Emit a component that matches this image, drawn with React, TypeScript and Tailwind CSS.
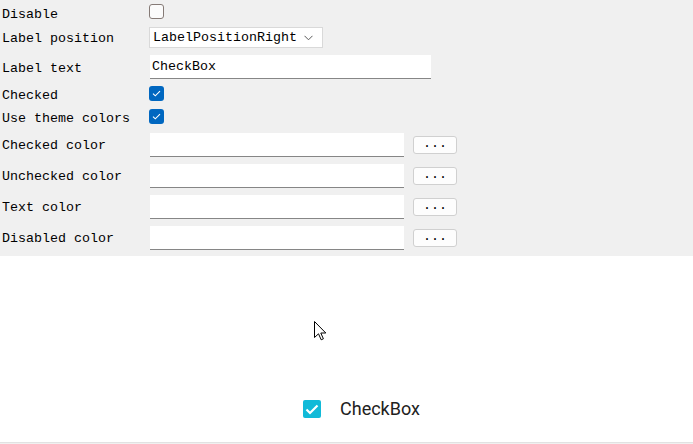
import React from "react";

const mono = { fontFamily: '"Liberation Mono", "DejaVu Sans Mono", monospace' };

function WinCheck({ checked }: { checked: boolean }) {
  if (!checked) {
    return <div className="w-[15px] h-[15px] rounded-[3px] border border-[#857a76] bg-[#fbfbfb] ml-[149px]" />;
  }
  return (
    <div className="w-[15px] h-[15px] rounded-[3px] bg-[#0067c0] ml-[149px] flex items-center justify-center">
      <svg width="9" height="7" viewBox="0 0 9 7" fill="none">
        <path d="M1 3.6 L3.3 5.8 L8 1.2" stroke="white" strokeWidth="1.1" />
      </svg>
    </div>
  );
}

function Row({ h, label, children, lt = 1 }: { h: number; label: string; children: React.ReactNode; lt?: number }) {
  return (
    <div className="relative flex items-center" style={{ height: h }}>
      <div
        className="absolute left-[2px] text-[13.33px] text-black leading-none"
        style={{ ...mono, transform: `translateY(${lt}px)` }}
      >
        {label}
      </div>
      {children}
    </div>
  );
}

function ColorRow({ label }: { label: string }) {
  return (
    <Row h={31} label={label}>
      <div className="ml-[150px] w-[254px] h-[24px] bg-white border-b border-[#868686]" />
      <div
        className="ml-[9px] w-[44px] h-[18px] bg-[#fdfdfd] border border-[#d0d0d0] rounded-[3px] flex items-center justify-center text-[13.33px] text-black leading-none pb-[2px]"
        style={mono}
      >
        ...
      </div>
    </Row>
  );
}

export default function App() {
  return (
    <div className="w-[693px] h-[444px] bg-[#f0f0f0] overflow-hidden relative">
      <Row h={24} label="Disable" lt={3}>
        <div className="-mt-[1px]">
          <WinCheck checked={false} />
        </div>
      </Row>
      <Row h={26} label="Label position" lt={2}>
        <div
          className="ml-[149px] w-[174px] h-[21px] bg-white border border-[#d9d9d9] flex items-center pl-[3px] pt-[1px] text-[13.33px] text-black leading-none"
          style={mono}
        >
          <span>LabelPositionRight</span>
          <svg className="ml-[7px]" width="9" height="6" viewBox="0 0 9 6" fill="none">
            <path d="M0.5 0.8 L4.5 4.8 L8.5 0.8" stroke="#5a5a5a" strokeWidth="1" />
          </svg>
        </div>
      </Row>
      <Row h={33} label="Label text" lt={2}>
        <div
          className="ml-[150px] w-[281px] h-[24px] bg-white border-b border-[#868686] flex items-center pl-[2px] pt-[1px] text-[13.33px] text-black leading-none"
          style={mono}
        >
          CheckBox
        </div>
      </Row>
      <Row h={21} label="Checked" lt={2}>
        <WinCheck checked />
      </Row>
      <Row h={25} label="Use theme colors" lt={2}>
        <WinCheck checked />
      </Row>
      <ColorRow label="Checked color" />
      <ColorRow label="Unchecked color" />
      <ColorRow label="Text color" />
      <ColorRow label="Disabled color" />
      <div className="mt-[3px] h-[187px] bg-white border-b border-[#e2e2e2] relative flex flex-col justify-end pb-[24px]">
        <div className="flex items-center ml-[303px]">
          <div className="w-[18px] h-[18px] rounded-[2px] bg-[#11bad8] flex items-center justify-center">
            <svg width="14" height="11" viewBox="0 0 14 11" fill="none">
              <path d="M1.5 5.5 L5 9 L12.5 1.5" stroke="white" strokeWidth="2.2" />
            </svg>
          </div>
          <span
            className="ml-[19px] text-[18px] leading-none text-[#212121]"
            style={{ fontFamily: 'Roboto, "Liberation Sans", sans-serif' }}
          >
            CheckBox
          </span>
        </div>
        <svg className="absolute left-[314px] top-[65px]" width="13" height="20" viewBox="0 0 13 20">
          <path
            d="M0.5 0.5 L0.5 16.5 L4.5 12.8 L7.2 18.8 L9.4 17.8 L6.8 12 L11.8 12 Z"
            fill="white"
            stroke="black"
            strokeWidth="1"
            strokeLinejoin="miter"
          />
        </svg>
      </div>
    </div>
  );
}
